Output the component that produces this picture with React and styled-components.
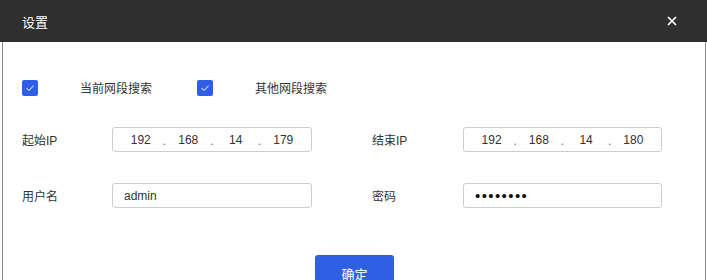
import React from 'react'
import styled, { createGlobalStyle } from 'styled-components'

const GlobalStyle = createGlobalStyle`
  body {
    margin: 0;
    background: #fff;
    font-family: "Liberation Sans", "Noto Sans CJK SC", sans-serif;
    color: #333;
  }
`

const Dialog = styled.div`
  width: 707px;
  height: 280px;
  overflow: hidden;
  display: flex;
  flex-direction: column;
  background: #fff;
`

const Header = styled.div`
  height: 42px;
  flex: none;
  background: #2f2f2f;
  display: flex;
  align-items: center;
  justify-content: space-between;
  padding: 0 30px 0 22px;
  color: #fff;
  font-size: 13px;
`

const CloseBtn = styled.button`
  width: 10px;
  height: 10px;
  padding: 0;
  border: 0;
  background: none;
  display: flex;
  cursor: pointer;
`

const Body = styled.div`
  flex: 1;
  margin: 0 1px 0 2px;
  border-left: 1px solid #8c8c8c;
  border-right: 1px solid #8c8c8c;
  padding: 37px 0 0 19px;
  display: flex;
  flex-direction: column;
`

const OptionRow = styled.div`
  display: grid;
  grid-template-columns: 175px auto;
  align-items: center;
  font-size: 12px;
  height: 16px;
`

const Option = styled.label`
  display: flex;
  align-items: center;
  gap: 42px;
`

const Box = styled.span`
  width: 16px;
  height: 16px;
  border-radius: 2px;
  background: ${(p) => (p.checked ? '#2f5fe6' : '#fff')};
  display: flex;
  align-items: center;
  justify-content: center;
`

const FieldRow = styled.div`
  display: grid;
  grid-template-columns: 350px 350px;
  margin-top: ${(p) => p.gap}px;
`

const Field = styled.div`
  display: grid;
  grid-template-columns: ${(p) => p.labelWidth}px ${(p) => p.inputWidth}px;
  align-items: center;
  font-size: 12px;
`

const InputBox = styled.div`
  height: 25px;
  box-sizing: border-box;
  border: 1px solid #cdcdcd;
  border-radius: 3px;
  background: #fff;
  display: flex;
  align-items: center;
  padding: ${(p) => (p.ip ? '0 6px' : '0 11px')};
  font-size: ${(p) => (p.secret ? '15px' : '12px')};
  letter-spacing: ${(p) => (p.secret ? '1.4px' : '0')};
  color: ${(p) => (p.secret ? '#111' : '#333')};
`

const Segment = styled.span`
  flex: 1;
  text-align: center;
`

const Dot = styled.span`
  width: 4px;
  text-align: center;
  color: #666;
  padding-top: 3px;
`

const Footer = styled.div`
  display: flex;
  justify-content: center;
  margin-top: 47px;
`

const Confirm = styled.button`
  width: 79px;
  height: 36px;
  border: 0;
  border-radius: 3px;
  background: #2f5fe6;
  color: #fff;
  font-family: inherit;
  font-size: 13px;
  padding: 0;
  margin-right: 18px;
`

const CheckOption = ({ label }) => (
  <Option>
    <Box checked>
      <svg width="10" height="8" viewBox="0 0 10 8">
        <polyline points="1.5,4.2 4,6.4 8.6,1.6" fill="none" stroke="#b9cbf8" strokeWidth="1.1" />
      </svg>
    </Box>
    <span>{label}</span>
  </Option>
)

const IpInput = ({ value }) => {
  const parts = value.split('.')
  return (
    <InputBox ip>
      {parts.map((p, i) => (
        <React.Fragment key={i}>
          {i > 0 && <Dot>.</Dot>}
          <Segment>{p}</Segment>
        </React.Fragment>
      ))}
    </InputBox>
  )
}

export default function App() {
  return (
    <>
      <GlobalStyle />
      <Dialog>
        <Header>
          <span>设置</span>
          <CloseBtn aria-label="close">
            <svg width="10" height="10" viewBox="0 0 10 10">
              <path d="M1 1 L9 9 M9 1 L1 9" stroke="#fff" strokeWidth="1.7" />
            </svg>
          </CloseBtn>
        </Header>
        <Body>
          <OptionRow>
            <CheckOption label="当前网段搜索" />
            <CheckOption label="其他网段搜索" />
          </OptionRow>
          <FieldRow gap={32}>
            <Field labelWidth={90} inputWidth={200}>
              <span>起始IP</span>
              <IpInput value="192.168.14.179" />
            </Field>
            <Field labelWidth={91} inputWidth={199}>
              <span>结束IP</span>
              <IpInput value="192.168.14.180" />
            </Field>
          </FieldRow>
          <FieldRow gap={31}>
            <Field labelWidth={90} inputWidth={200}>
              <span>用户名</span>
              <InputBox>admin</InputBox>
            </Field>
            <Field labelWidth={91} inputWidth={199}>
              <span>密码</span>
              <InputBox secret>••••••••</InputBox>
            </Field>
          </FieldRow>
          <Footer>
            <Confirm>确定</Confirm>
          </Footer>
        </Body>
      </Dialog>
    </>
  )
}
